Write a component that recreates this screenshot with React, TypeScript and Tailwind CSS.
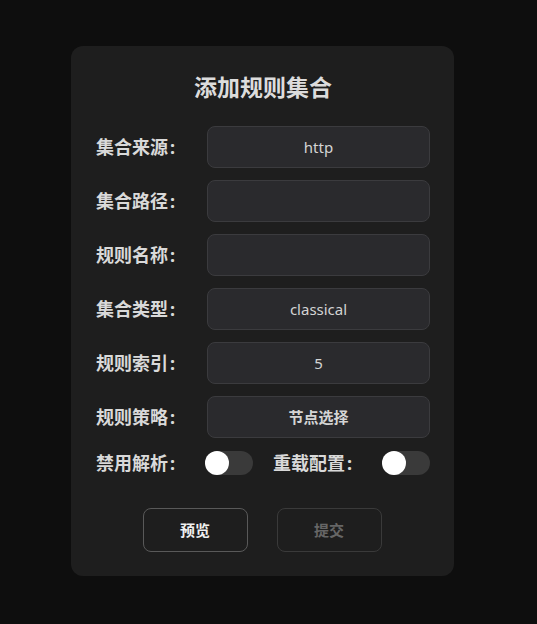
const font = { fontFamily: '"Noto Sans", "Noto Sans CJK SC", sans-serif' };

function Field({ label, value, bold }: { label: string; value?: string; bold?: boolean }) {
  return (
    <div className="flex items-center">
      <div className="w-[111px] text-[18px] font-bold text-[#d9d9d9]">
        {label}
        <span className="ml-[2px]">:</span>
      </div>
      <div
        className={`flex h-[42px] w-[223px] items-center justify-center rounded-[8px] border border-[#3b3b3e] bg-[#2a2a2d] text-[15px] text-[#d4d4d4] ${
          bold ? "font-bold" : ""
        }`}
      >
        {value}
      </div>
    </div>
  );
}

function Toggle() {
  return (
    <div className="flex h-[24px] w-[48px] items-center rounded-full bg-[#3a3a3a]">
      <div className="h-[24px] w-[24px] rounded-full bg-white" />
    </div>
  );
}

export default function App() {
  return (
    <div className="min-h-screen bg-[#0e0e0e] pl-[71px] pt-[46px]" style={font}>
      <div className="w-[383px] rounded-[12px] bg-[#1e1e1e] pl-[25px] pr-[24px] pt-[27px] pb-[24px]">
        <h1 className="mb-[25px] text-center text-[23px] font-bold leading-[28px] text-[#dcdcdc]">添加规则集合</h1>

        <div className="flex flex-col gap-[12px]">
          <Field label="集合来源" value="http" />
          <Field label="集合路径" />
          <Field label="规则名称" />
          <Field label="集合类型" value="classical" />
          <Field label="规则索引" value="5" />
          <Field label="规则策略" value="节点选择" bold />

          <div className="mt-[1px] flex gap-[20px]">
            <div className="flex w-[157px] items-center justify-between">
              <span className="text-[18px] font-bold leading-[24px] text-[#d9d9d9]">
                禁用解析<span className="ml-[2px]">:</span>
              </span>
              <Toggle />
            </div>
            <div className="flex w-[157px] items-center justify-between">
              <span className="text-[18px] font-bold leading-[24px] text-[#d9d9d9]">
                重载配置<span className="ml-[2px]">:</span>
              </span>
              <Toggle />
            </div>
          </div>
        </div>

        <div className="mt-[33px] flex justify-center gap-[29px] pr-[2px]">
          <button className="h-[44px] w-[105px] rounded-[8px] border border-[#595959] text-[15px] font-bold text-[#f0f0f0]">
            预览
          </button>
          <button className="h-[44px] w-[105px] rounded-[8px] border border-[#3a3a3a] text-[15px] font-bold text-[#666666]">
            提交
          </button>
        </div>
      </div>
    </div>
  );
}
